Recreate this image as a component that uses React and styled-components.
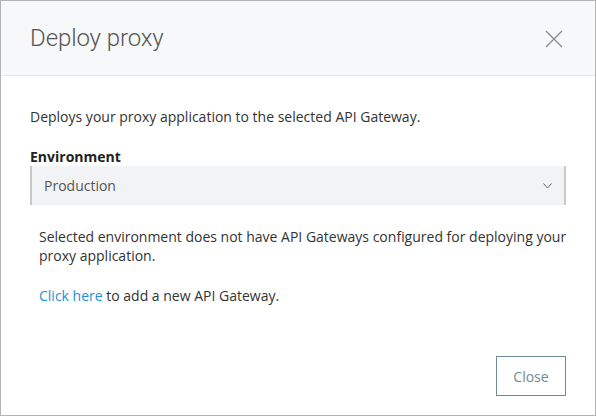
import React from "react";
import styled, { createGlobalStyle } from "styled-components";

const Global = createGlobalStyle`
  html, body { margin: 0; padding: 0; background: #fff; }
  * { box-sizing: border-box; }
`;

const Dialog = styled.div`
  width: 596px;
  height: 416px;
  border: 1px solid #b3b3b3;
  background: #fff;
  display: flex;
  flex-direction: column;
  font-family: "Open Sans", "Liberation Sans", sans-serif;
  font-size: 14px;
  line-height: 19px;
  color: #333;
`;

const Header = styled.div`
  height: 75px;
  flex: none;
  background: #f7f8fa;
  border-bottom: 1px solid #e4e5e7;
  display: flex;
  align-items: center;
  justify-content: space-between;
  padding: 0 32px 0 29px;
`;

const Title = styled.h1`
  margin: 0;
  font-family: Roboto, "Liberation Sans", sans-serif;
  font-weight: 300;
  font-size: 24px;
  color: #555;
  letter-spacing: -0.1px;
`;

const CloseIcon = styled.button`
  border: 0;
  background: none;
  padding: 0;
  width: 18px;
  height: 18px;
  display: flex;
  margin-top: 1px;
  cursor: pointer;
`;

const Body = styled.div`
  flex: 1;
  padding: 31px 29px 0 29px;
  display: flex;
  flex-direction: column;
`;

const Text = styled.p`
  margin: 0;
`;

const Label = styled.div`
  margin-top: 21px;
  font-weight: 700;
  color: #222;
`;

const Select = styled.div`
  height: 39px;
  background: #f2f3f5;
  border-left: 2px solid #c9c9c9;
  border-right: 2px solid #c9c9c9;
  display: flex;
  align-items: center;
  justify-content: space-between;
  padding: 0 12px 0 12px;
  color: #555;
`;

const Message = styled.div`
  margin-top: 22px;
  margin-right: -8px;
  padding-left: 9px;
  display: flex;
  flex-direction: column;
  gap: 21px;
`;

const Link = styled.a`
  color: #1b8fd8;
  text-decoration: none;
`;

const Footer = styled.div`
  margin-top: auto;
  display: flex;
  justify-content: flex-end;
  padding: 0 0 19px 0;
`;

const Button = styled.button`
  width: 70px;
  height: 40px;
  border: 1px solid #6d8b97;
  background: #fff;
  color: #6d8b97;
  font-family: "Open Sans", "Liberation Sans", sans-serif;
  font-size: 14px;
  cursor: pointer;
`;

export default function App() {
  return (
    <>
      <Global />
      <Dialog>
        <Header>
          <Title>Deploy proxy</Title>
          <CloseIcon aria-label="Close">
            <svg width="18" height="18" viewBox="0 0 18 18">
              <path d="M1 1 L17 17 M17 1 L1 17" stroke="#8a8a8a" strokeWidth="1.3" fill="none" />
            </svg>
          </CloseIcon>
        </Header>
        <Body>
          <Text>Deploys your proxy application to the selected API Gateway.</Text>
          <Label>Environment</Label>
          <Select>
            <span>Production</span>
            <svg width="9" height="6" viewBox="0 0 9 6">
              <path d="M0.5 0.5 L4.5 5 L8.5 0.5" stroke="#666" strokeWidth="1" fill="none" />
            </svg>
          </Select>
          <Message>
            <Text>
              Selected environment does not have API Gateways configured for deploying your proxy application.
            </Text>
            <Text>
              <Link href="#">Click here</Link> to add a new API Gateway.
            </Text>
          </Message>
          <Footer>
            <Button>Close</Button>
          </Footer>
        </Body>
      </Dialog>
    </>
  );
}
